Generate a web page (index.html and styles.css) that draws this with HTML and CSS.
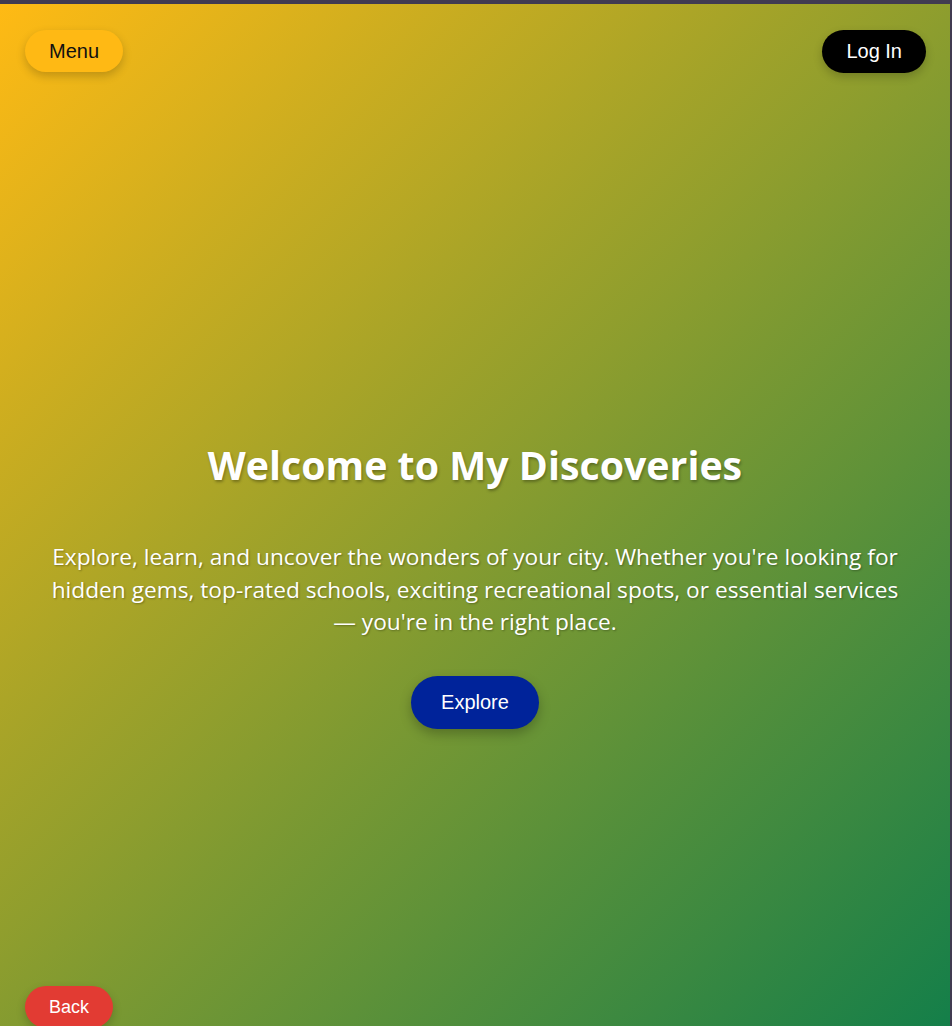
FILE: index.html
```html
<!DOCTYPE html>
<html lang="en">
<head>
<meta charset="utf-8">
<title>My Discoveries</title>
<link rel="stylesheet" href="styles.css">
</head>
<body>
<div class="page">
  <header class="topbar">
    <button class="btn btn-menu">Menu</button>
    <button class="btn btn-login">Log In</button>
  </header>
  <main class="hero">
    <h1 class="hero-title">Welcome to My Discoveries</h1>
    <p class="hero-text">Explore, learn, and uncover the wonders of your city. Whether you're looking for hidden gems, top-rated schools, exciting recreational spots, or essential services — you're in the right place.</p>
    <button class="btn btn-explore">Explore</button>
  </main>
  <footer class="bottombar">
    <button class="btn btn-back">Back</button>
  </footer>
</div>
</body>
</html>
```
FILE: styles.css
```css
html, body {
  margin: 0;
  padding: 0;
}
body {
  background: #413b51;
  padding-top: 4px;
  padding-right: 2px;
  overflow: hidden;
  height: 1026px;
  box-sizing: border-box;
}
.page {
  background: linear-gradient(135deg, #ffba14 0%, #0d7d4b 100%);
  min-height: 1080px;
  display: flex;
  flex-direction: column;
  font-family: "Open Sans", "Noto Sans", sans-serif;
}
.topbar {
  display: flex;
  justify-content: space-between;
  align-items: flex-start;
  padding: 26px 24px 0 25px;
}
.btn {
  font-family: "Liberation Sans", Arial, sans-serif;
  font-size: 20px;
  border: none;
  border-radius: 999px;
  cursor: pointer;
  box-shadow: 0 4px 10px rgba(0, 0, 0, 0.2);
  line-height: 1;
}
.btn-menu {
  background: #ffb914;
  color: #111;
  padding: 11px 24px;
}
.btn-login {
  background: #000;
  color: #fff;
  padding: 11px 24px 12px;
}
.hero {
  display: flex;
  flex-direction: column;
  align-items: center;
  text-align: center;
  padding: 0 49px;
  margin-top: 367px;
}
.hero-title {
  color: #fff;
  font-size: 39.3px;
  font-weight: 700;
  margin: 0;
  line-height: 1.3;
  text-shadow: 1px 2px 3px rgba(0, 0, 0, 0.3);
}
.hero-text {
  color: #fff;
  font-size: 22.7px;
  line-height: 32.5px;
  margin: 50px 0 0;
  text-shadow: 1px 1px 2px rgba(0, 0, 0, 0.3);
}
.btn-explore {
  background: #00239a;
  color: #fff;
  padding: 16px 30px 17px;
  margin-top: 37px;
  box-shadow: 0 5px 12px rgba(0, 0, 0, 0.25);
}
.bottombar {
  padding: 0 25px;
  margin-top: 257px;
}
.btn-back {
  background: #e23b33;
  color: #fff;
  font-size: 18px;
  padding: 12px 24px;
}
```
